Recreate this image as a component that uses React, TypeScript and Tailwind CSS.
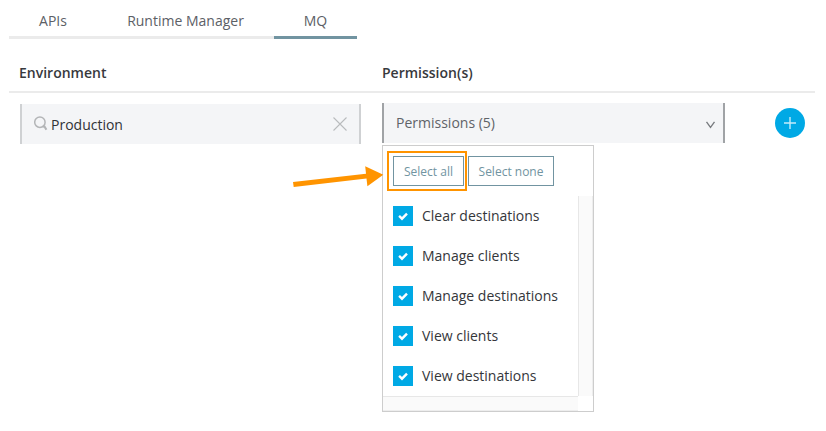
import React from 'react';

const permissions = [
  'Clear destinations',
  'Manage clients',
  'Manage destinations',
  'View clients',
  'View destinations',
];

function Tabs() {
  return (
    <nav className="ml-[9px] flex h-[39px] text-[#5c6066]">
      <div className="flex w-[88px] justify-center border-b-[3px] border-[#ebebeb] pt-[11px]">APIs</div>
      <div className="flex w-[177px] justify-center border-b-[3px] border-[#ebebeb] pt-[11px]">Runtime Manager</div>
      <div className="flex w-[83px] justify-center border-b-[3px] border-[#7194a1] pt-[11px]">MQ</div>
    </nav>
  );
}

function EnvironmentField() {
  return (
    <div className="mt-[11px] flex h-10 w-[341px] items-center border-x-2 border-[#cfd1d3] bg-[#f4f5f7]">
      <svg className="ml-3 mt-[-1px] h-4 w-[14px] shrink-0" viewBox="0 0 14 16" fill="none" stroke="#b3b5b7">
        <circle cx="5.9" cy="6.2" r="5.2" strokeWidth="1.5" />
        <path d="M8.8 10.4 L10.6 10.8 L12.4 13.8" strokeWidth="2.1" />
      </svg>
      <span className="ml-[3px] mt-[2px] text-[#303236]">Production</span>
      <svg className="ml-auto mr-[11px] mt-[-1px] h-4 w-4" viewBox="0 0 16 16" fill="none" stroke="#b9bbbd" strokeWidth="1.1">
        <path d="M1.5 1.5 L14.5 14.5 M14.5 1.5 L1.5 14.5" />
      </svg>
    </div>
  );
}

function PermissionMenu() {
  return (
    <div className="mt-[2px] flex h-[267px] w-[212px] flex-col border border-[#cdcdcd] bg-white">
      <div className="flex h-[50px] pl-1 pt-[5px]">
        <div className="h-10 w-20 border-2 border-[#ff9400] pl-1 pt-[3px]">
          <button className="h-[30px] w-[71px] border border-[#7194a1] pt-[2px] text-xs text-[#7194a1]">Select all</button>
        </div>
        <button className="ml-[1px] mt-[5px] h-[30px] w-[86px] border border-[#7194a1] pt-[2px] text-xs text-[#7194a1]">
          Select none
        </button>
      </div>
      <div className="flex h-[200px]">
        <ul className="w-[195px]">
          {permissions.map((name) => (
            <li key={name} className="flex h-10 items-center pl-[10px] text-[#34363a]">
              <span className="flex h-5 w-5 items-center justify-center bg-[#00a9e5]">
                <svg className="h-[10px] w-[10px]" viewBox="0 0 10 10" fill="none" stroke="white" strokeWidth="2.4">
                  <path d="M1.1 4.9 L4 7.7 L9 2.7" />
                </svg>
              </span>
              <span className="ml-[9px]">{name}</span>
            </li>
          ))}
        </ul>
        <div className="w-[15px] border-x border-l-[#e7e7e7] border-r-[#ededed] bg-[#fafafa]" />
      </div>
      <div className="h-[15px] w-[195px] border-y border-t-[#e7e7e7] border-b-[#ededed] bg-[#fafafa]" />
    </div>
  );
}

export default function App() {
  return (
    <div className="relative h-[431px] w-[826px] overflow-hidden bg-white font-['Open_Sans',sans-serif] text-sm leading-5">
      <Tabs />
      <header className="ml-[9px] flex h-[54px] w-[806px] border-b-2 border-[#ebebeb] pt-6 font-semibold text-[#37393d]">
        <div className="w-[363px] pl-[10px]">Environment</div>
        <div className="pl-[10px]">Permission(s)</div>
      </header>
      <main className="flex items-start pl-5">
        <EnvironmentField />
        <section className="ml-[21px] mt-[10px] w-[343px]">
          <div className="flex h-10 items-center justify-between border-x-2 border-[#a0a3a6] bg-[#f4f5f7] pl-3 pr-[7px] text-[#606368]">
            <span>Permissions (5)</span>
            <svg className="mt-[3px] h-[10px] w-[11px]" viewBox="0 0 11 10" fill="none" stroke="#777a7e" strokeWidth="1.3">
              <path d="M1.5 1.8 L5.5 7.4 L9.5 1.8" />
            </svg>
          </div>
          <PermissionMenu />
        </section>
        <button className="ml-[50px] mt-[15px] flex h-[30px] w-[30px] items-center justify-center rounded-full bg-[#00a9e5]" aria-label="Add">
          <svg className="h-3 w-3" viewBox="0 0 12 12" stroke="#c5ecfa" strokeWidth="1.4">
            <path d="M6 0 V12 M0 6 H12" />
          </svg>
        </button>
      </main>
      <svg className="absolute left-[292px] top-[164px] h-6 w-[92px]" viewBox="0 0 92 24" fill="#ff9400">
        <path d="M1 18.1 L74 9.8 L73.2 2.3 L91.3 10.7 L75.4 22.2 L74.5 14.5 L1.7 22.9 Z" />
      </svg>
    </div>
  );
}
